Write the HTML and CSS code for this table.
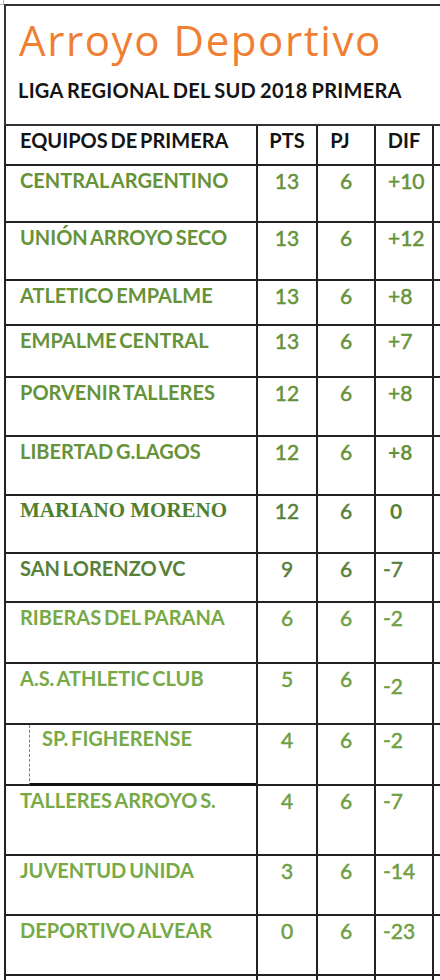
FILE: index.html
```html
<!DOCTYPE html>
<html lang="es">
<head>
<meta charset="utf-8">
<title>Arroyo Deportivo - Liga Regional del Sud 2018</title>
<link rel="stylesheet" href="styles.css">
</head>
<body>
<div class="sheet">
  <div class="corner"></div>
  <div class="title-line">
    <div class="title-box">
      <div class="title">Arroyo Deportivo</div>
      <div class="subtitle">LIGA REGIONAL DEL SUD 2018 PRIMERA</div>
    </div>
    <div class="title-rest"></div>
  </div>

  <div class="row head">
    <div class="cell name">EQUIPOS DE PRIMERA</div>
    <div class="cell pts">PTS</div>
    <div class="cell pj">PJ</div>
    <div class="cell dif">DIF</div>
    <div class="cell extra"></div>
  </div>

  <div class="row h57 mid">
    <div class="cell name">CENTRAL ARGENTINO</div>
    <div class="cell pts">13</div>
    <div class="cell pj">6</div>
    <div class="cell dif">+10</div>
    <div class="cell extra"></div>
  </div>
  <div class="row h58 mid">
    <div class="cell name">UNIÓN ARROYO SECO</div>
    <div class="cell pts">13</div>
    <div class="cell pj">6</div>
    <div class="cell dif">+12</div>
    <div class="cell extra"></div>
  </div>
  <div class="row h45 mid">
    <div class="cell name">ATLETICO EMPALME</div>
    <div class="cell pts">13</div>
    <div class="cell pj">6</div>
    <div class="cell dif">+8</div>
    <div class="cell extra"></div>
  </div>
  <div class="row h52 mid">
    <div class="cell name">EMPALME CENTRAL</div>
    <div class="cell pts">13</div>
    <div class="cell pj">6</div>
    <div class="cell dif">+7</div>
    <div class="cell extra"></div>
  </div>
  <div class="row h59 mid">
    <div class="cell name">PORVENIR TALLERES</div>
    <div class="cell pts">12</div>
    <div class="cell pj">6</div>
    <div class="cell dif">+8</div>
    <div class="cell extra"></div>
  </div>
  <div class="row h59 mid">
    <div class="cell name">LIBERTAD G.LAGOS</div>
    <div class="cell pts">12</div>
    <div class="cell pj">6</div>
    <div class="cell dif strong">+8</div>
    <div class="cell extra"></div>
  </div>
  <div class="row h58 dark">
    <div class="cell name serif">MARIANO MORENO</div>
    <div class="cell pts">12</div>
    <div class="cell pj">6</div>
    <div class="cell dif strong zero">0</div>
    <div class="cell extra"></div>
  </div>
  <div class="row h49 dark">
    <div class="cell name">SAN LORENZO VC</div>
    <div class="cell pts">9</div>
    <div class="cell pj">6</div>
    <div class="cell dif neg">-7</div>
    <div class="cell extra"></div>
  </div>
  <div class="row h61 light">
    <div class="cell name">RIBERAS DEL PARANA</div>
    <div class="cell pts">6</div>
    <div class="cell pj">6</div>
    <div class="cell dif neg">-2</div>
    <div class="cell extra"></div>
  </div>
  <div class="row h61 light">
    <div class="cell name">A.S. ATHLETIC CLUB</div>
    <div class="cell pts">5</div>
    <div class="cell pj">6</div>
    <div class="cell dif neg low">-2</div>
    <div class="cell extra"></div>
  </div>
  <div class="row h61 light">
    <div class="cell name selected"><div class="sel-box">SP. FIGHERENSE</div></div>
    <div class="cell pts">4</div>
    <div class="cell pj">6</div>
    <div class="cell dif neg">-2</div>
    <div class="cell extra"></div>
  </div>
  <div class="row h70 light">
    <div class="cell name">TALLERES ARROYO S.</div>
    <div class="cell pts">4</div>
    <div class="cell pj">6</div>
    <div class="cell dif neg">-7</div>
    <div class="cell extra"></div>
  </div>
  <div class="row h60 light">
    <div class="cell name">JUVENTUD UNIDA</div>
    <div class="cell pts">3</div>
    <div class="cell pj">6</div>
    <div class="cell dif neg">-14</div>
    <div class="cell extra"></div>
  </div>
  <div class="row h60 light">
    <div class="cell name">DEPORTIVO ALVEAR</div>
    <div class="cell pts">0</div>
    <div class="cell pj">6</div>
    <div class="cell dif neg">-23</div>
    <div class="cell extra"></div>
  </div>
  <div class="row h40 light">
    <div class="cell name"></div>
    <div class="cell pts"></div>
    <div class="cell pj"></div>
    <div class="cell dif"></div>
    <div class="cell extra"></div>
  </div>
</div>
</body>
</html>
```

FILE: styles.css
```css
html, body {
  margin: 0;
  padding: 0;
  background: #ffffff;
}

body {
  font-family: Lato, "Open Sans", "Liberation Sans", sans-serif;
  width: 440px;
  height: 980px;
  overflow: hidden;
}

.sheet {
  position: relative;
  width: 440px;
  padding-top: 4px;
}

.corner {
  position: absolute;
  left: 0;
  top: 0;
  width: 3px;
  height: 4px;
  border-right: 1px solid #b5b5b5;
  border-bottom: 1px solid #b5b5b5;
}

/* ---------- title block ---------- */
.title-line {
  display: flex;
  align-items: flex-start;
}

.title-box {
  margin-left: 4px;
  width: 422px;
  height: 118px;
  border: 2px solid #333;
  padding-left: 12px;
  flex: none;
}

.title-rest {
  flex: 1;
  border-top: 2px solid #c8c8c8;
}

.title {
  font-family: "Open Sans", Lato, sans-serif;
  font-size: 42px;
  line-height: 1.2;
  color: #ef7f32;
  padding-top: 9px;
  margin-left: 1px;
  letter-spacing: 1.6px;
}

.subtitle {
  margin-top: 13px;
  font-size: 20px;
  line-height: 1.2;
  font-weight: 700;
  color: #141414;
  word-spacing: -1px;
  letter-spacing: 0.25px;
}

/* ---------- grid ---------- */
.row {
  display: flex;
  margin-left: 4px;
  border-left: 2px solid #222;
  box-sizing: border-box;
}

.cell {
  box-sizing: border-box;
  border-bottom: 2px solid #222;
  border-right: 2px solid #222;
  padding-top: 2px;
  line-height: 1.2;
  white-space: nowrap;
}

.name {
  width: 252px;
  padding-left: 14px;
  font-size: 20px;
  font-weight: 700;
  word-spacing: -2px;
}

.pts, .pj {
  text-align: center;
  font-size: 21px;
  -webkit-text-stroke: 0.5px currentColor;
}

.pts { width: 60px; }
.pj { width: 58px; }

.dif {
  width: 58px;
  font-size: 21px;
  padding-left: 12px;
  -webkit-text-stroke: 0.5px currentColor;
}

.dif.neg { padding-left: 7px; }
.dif.zero { padding-left: 14px; }
.dif.low { padding-top: 9px; }
.dif.strong { font-weight: 700; -webkit-text-stroke: 0; }

.extra {
  flex: 1;
  border-right: none;
}

/* header */
.head { height: 40px; }
.head .cell {
  color: #141414;
  font-weight: 700;
  font-size: 20px;
  -webkit-text-stroke: 0;
}
.head .pts, .head .pj, .head .dif { text-align: center; padding-left: 0; }
.head .pj { padding-right: 12px; }

/* row heights */
.h40 { height: 40px; }
.h45 { height: 45px; }
.h49 { height: 49px; }
.h52 { height: 52px; }
.h57 { height: 57px; }
.h58 { height: 58px; }
.h59 { height: 59px; }
.h60 { height: 60px; }
.h61 { height: 61px; }
.h70 { height: 70px; }

/* colours */
.mid .cell { color: #66923a; }
.dark .cell { color: #57813a; }
.light .cell { color: #77aa47; }
.light .pts, .light .pj, .light .dif { color: #6f9f42; }

.name.serif {
  font-family: "Liberation Serif", "DejaVu Serif", serif;
  font-size: 21px;
  word-spacing: 0;
  color: #4f7f2f;
}

/* selected cell artifact */
.selected {
  padding-left: 23px;
  padding-top: 0;
}
.sel-box {
  height: calc(100% + 2px);
  box-sizing: border-box;
  border-left: 1px dashed #5b7fd0;
  border-bottom: 3px solid #111;
  padding-left: 12px;
  padding-top: 1px;
}
```
